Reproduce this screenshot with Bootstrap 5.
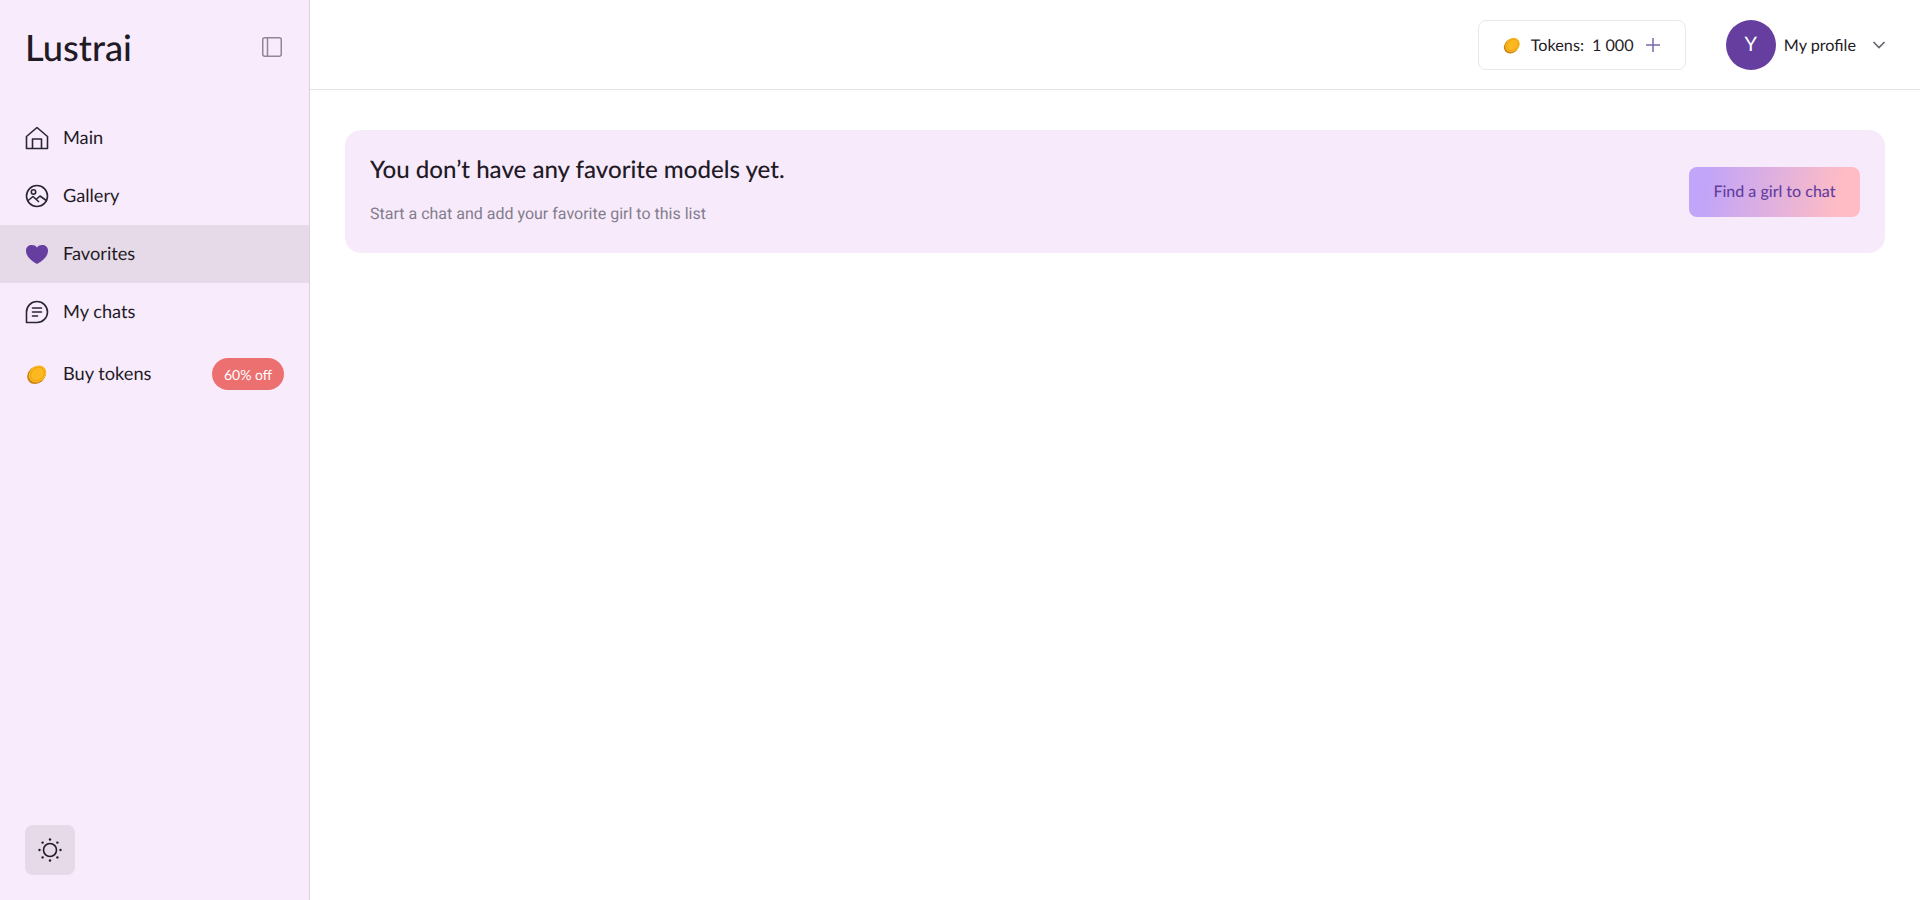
<!DOCTYPE html>
<html lang="en">
<head>
<meta charset="utf-8">
<title>Lustrai</title>
<link href="https://cdn.jsdelivr.net/npm/bootstrap@5.3.0/dist/css/bootstrap.min.css" rel="stylesheet">
<style>
html,body{height:100%;}
body{font-family:"Lato","Liberation Sans",sans-serif;color:#1f1a26;background:#fff;overflow:hidden;text-rendering:geometricPrecision;}
.shell{height:900px;}
.side{width:310px;flex:none;background:#f7ebfc;border-right:1px solid #d9d3e0;}
.brand-row{height:94px;padding:0 27px 0 25px;}
.brand{font-size:36.3px;font-weight:500;line-height:1;color:#1f1a26;}
.nav-area{padding-top:15px;}
.side-link{height:58px;padding:0 25px;gap:14px;font-size:18.2px;color:#1f1a26;text-decoration:none;}
.side-link:hover{color:#1f1a26;}
.side-link.on{background:#e6dae8;}
.side-link.tall{height:66px;}
.top-label{padding-top:3px;}
.ico{width:24px;height:24px;flex:none;display:block;}
.off-pill{background:#ec7070;color:#fff;font-size:14px;border-radius:16px;height:32px;width:72px;}
.theme-wrap{padding:0 25px 25px;}
.theme-btn{width:50px;height:50px;background:#e6dae8;border-radius:8px;border:0;padding:0;}
.top{height:90px;border-bottom:1px solid #e4e4e7;padding-right:34px;gap:40px;}
.tokens{width:208px;height:50px;border:1px solid #e8e8ec;border-radius:8px;padding:0 23px;gap:10px;font-size:16.2px;color:#1f1a26;white-space:nowrap;}
.tokens svg{flex:none;}
.coin-small{margin-right:-1px;}
.token-count{margin-left:-2px;}
.ava{width:50px;height:50px;background:#653ea0;color:#fff;font-size:20px;padding-bottom:1px;}
.prof{font-size:16.2px;gap:8px;white-space:nowrap;}
.chev{margin-left:8px;}
.plus-ico{margin-left:1px;}
.panel{margin:40px 35px 0;height:123px;background:#f7ebfb;border-radius:16px;padding:0 25px;}
.panel-text{padding-bottom:5px;}
.panel-h{font-size:24.1px;font-weight:500;line-height:30px;margin:0 0 19px;color:#1f1a26;}
.panel-s{font-family:"Roboto",sans-serif;font-size:16px;line-height:20px;color:#837c8c;margin:0;}
.find{width:171px;height:50px;border:0;border-radius:8px;background:linear-gradient(100deg,#c2a5f8 12%,#ffbcc4 88%);color:#653ea0;font-size:16px;font-weight:500;padding:0;text-rendering:geometricPrecision;}
</style>
</head>
<body>
<div class="d-flex shell">
  <aside class="side d-flex flex-column">
    <div class="brand-row d-flex align-items-center justify-content-between">
      <span class="brand">Lustrai</span>
      <svg width="20" height="20" viewBox="0 0 20 20" fill="none" stroke="#8f8796" stroke-width="1.5"><rect x=".75" y=".75" width="18.500" height="18.500" rx="2"/><path d="M5.500 .75v18.500"/></svg>
    </div>
    <nav class="nav-area flex-grow-1">
      <a class="side-link d-flex align-items-center" href="#">
        <svg class="ico" viewBox="0 0 24 24" fill="none" stroke="#2b2633" stroke-width="1.6" stroke-linejoin="round"><path d="M1.500 22.500V10.500L12 1.500l10.500 9v12z"/><path d="M7.500 22.500V13h9v9.500"/></svg>
        <span>Main</span>
      </a>
      <a class="side-link d-flex align-items-center" href="#">
        <svg class="ico" viewBox="0 0 24 24" fill="none" stroke="#2b2633" stroke-width="1.6" stroke-linejoin="round"><circle cx="12" cy="12" r="10.500"/><circle cx="8.500" cy="8" r="2.200"/><path d="M2.500 17l5.500-4.500 6 5.500"/><path d="M11 15.500l4-3.500 7 5"/></svg>
        <span>Gallery</span>
      </a>
      <a class="side-link on d-flex align-items-center" href="#">
        <svg class="ico" viewBox="0 0 24 24"><path fill="#653ea0" d="M12 22C5 18 1 14 1 8.500 1 5 3.700 3 6.800 3 9 3 11 3.800 12 5.500 13 3.800 15 3 17.200 3 20.300 3 23 5 23 8.500 23 14 19 18 12 22z"/></svg>
        <span>Favorites</span>
      </a>
      <a class="side-link d-flex align-items-center" href="#">
        <svg class="ico" viewBox="0 0 24 24" fill="none" stroke="#2b2633" stroke-width="1.6" stroke-linecap="round" stroke-linejoin="round"><path d="M1.500 22.500V12A10.500 10.500 0 1 1 12 22.500z"/><path d="M7.500 8h9M7.500 12h9M7.500 16h5"/></svg>
        <span>My chats</span>
      </a>
      <a class="side-link tall d-flex align-items-center" href="#">
        <svg class="ico" viewBox="0 0 24 24"><ellipse cx="11.500" cy="13" rx="10" ry="8.300" transform="rotate(-42 11.500 13)" fill="#c9820f"/><ellipse cx="12.500" cy="12" rx="9.400" ry="7.800" transform="rotate(-42 12.500 12)" fill="#fbb81f"/><ellipse cx="12.500" cy="12" rx="7.600" ry="6" transform="rotate(-42 12.500 12)" fill="none" stroke="#e89d12" stroke-width=".8"/></svg>
        <span>Buy tokens</span>
        <span class="off-pill d-flex align-items-center justify-content-center ms-auto">60% off</span>
      </a>
    </nav>
    <div class="theme-wrap">
      <button class="theme-btn d-flex align-items-center justify-content-center" type="button" aria-label="Theme">
        <svg class="ico" viewBox="0 0 24 24" fill="none" stroke="#1f1a26" stroke-width="1.600"><circle cx="12" cy="12" r="6.500"/><g fill="#1f1a26" stroke="none"><circle cx="12" cy="1.500" r="1.200"/><circle cx="12" cy="22.500" r="1.200"/><circle cx="1.500" cy="12" r="1.200"/><circle cx="22.500" cy="12" r="1.200"/><circle cx="4.600" cy="4.600" r="1.200"/><circle cx="19.400" cy="4.600" r="1.200"/><circle cx="4.600" cy="19.400" r="1.200"/><circle cx="19.400" cy="19.400" r="1.200"/></g></svg>
      </button>
    </div>
  </aside>
  <main class="flex-grow-1">
    <header class="top d-flex align-items-center justify-content-end">
      <div class="tokens d-flex align-items-center">
        <svg width="20" height="20" viewBox="0 0 24 24" class="coin-small"><ellipse cx="11.500" cy="13" rx="10" ry="8.300" transform="rotate(-42 11.500 13)" fill="#c9820f"/><ellipse cx="12.500" cy="12" rx="9.400" ry="7.800" transform="rotate(-42 12.500 12)" fill="#fbb81f"/><ellipse cx="12.500" cy="12" rx="7.600" ry="6" transform="rotate(-42 12.500 12)" fill="none" stroke="#e89d12" stroke-width=".8"/></svg>
        <span class="top-label">Tokens:</span>
        <span class="top-label token-count">1 000</span>
        <svg width="16" height="16" viewBox="0 0 16 16" class="plus-ico" fill="none" stroke="#7a68ab" stroke-width="1.500"><path d="M8 1v14M1 8h14"/></svg>
      </div>
      <div class="prof d-flex align-items-center">
        <span class="ava rounded-circle d-flex align-items-center justify-content-center">Y</span>
        <span class="top-label">My profile</span>
        <svg width="14" height="10" viewBox="0 0 14 10" class="chev" fill="none" stroke="#67616f" stroke-width="1.600"><path d="M1.500 2l5.500 5.500L12.500 2"/></svg>
      </div>
    </header>
    <section class="panel d-flex align-items-center justify-content-between">
      <div class="panel-text">
        <h1 class="panel-h">You don’t have any favorite models yet.</h1>
        <p class="panel-s">Start a chat and add your favorite girl to this list</p>
      </div>
      <button class="find btn" type="button">Find a girl to chat</button>
    </section>
  </main>
</div>
<script src="https://cdn.jsdelivr.net/npm/bootstrap@5.3.0/dist/js/bootstrap.bundle.min.js"></script>
</body>
</html>
